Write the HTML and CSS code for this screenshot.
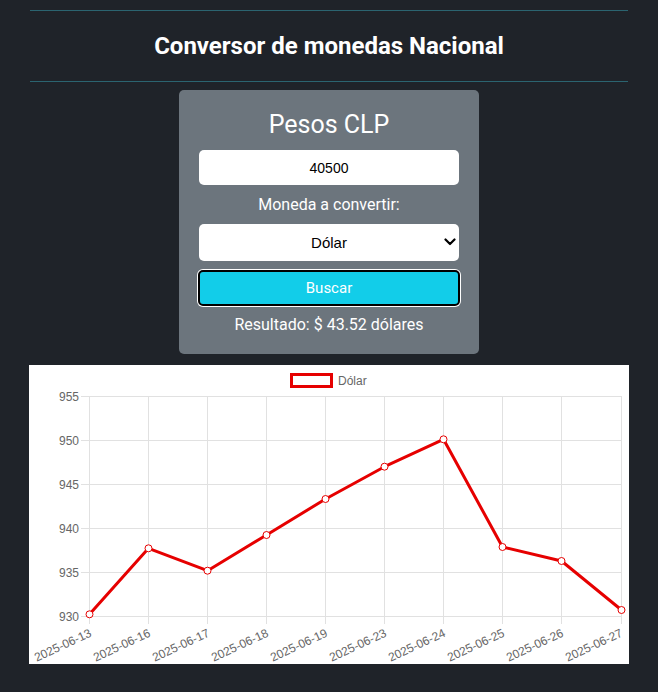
FILE: index.html
```html
<!DOCTYPE html>
<html lang="es">
<head>
<meta charset="utf-8">
<title>Conversor de monedas Nacional</title>
<link rel="stylesheet" href="styles.css">
</head>
<body>
<div class="page">
  <hr class="rule">
  <h1 class="title">Conversor de monedas Nacional</h1>
  <hr class="rule">
  <div class="card">
    <h2 class="card-title">Pesos CLP</h2>
    <input class="field" type="text" value="40500">
    <label class="label">Moneda a convertir:</label>
    <div class="select-wrap">
      <select class="field select">
        <option>Dólar</option>
      </select>
      <svg class="chevron" width="12" height="8" viewBox="0 0 12 8"><path d="M1.5 1.5 L6 6 L10.5 1.5" fill="none" stroke="#000" stroke-width="2.2" stroke-linecap="round" stroke-linejoin="round"/></svg>
    </div>
    <button class="btn">Buscar</button>
    <p class="result">Resultado: $ 43.52 dólares</p>
  </div>
  <div class="chart">
    <svg width="600" height="299" viewBox="0 0 600 299" class="chart-svg">
      <rect x="0" y="0" width="600" height="299" fill="#fff"/>
      <!-- legend -->
      <rect x="262.5" y="9.5" width="40" height="12" fill="#fff" stroke="#e60000" stroke-width="3"/>
      <text x="309" y="19.5" class="lg">Dólar</text>
      <!-- horizontal grid -->
      <g stroke="#e1e1e1" stroke-width="1">
        <line x1="52" y1="31.5" x2="592.5" y2="31.5"/>
        <line x1="52" y1="75.5" x2="592.5" y2="75.5"/>
        <line x1="52" y1="119.5" x2="592.5" y2="119.5"/>
        <line x1="52" y1="163.5" x2="592.5" y2="163.5"/>
        <line x1="52" y1="207.5" x2="592.5" y2="207.5"/>
        <line x1="52" y1="251.5" x2="592.5" y2="251.5"/>
      </g>
      <!-- vertical grid -->
      <g stroke="#e1e1e1" stroke-width="1">
        <line x1="60.5" y1="31" x2="60.5" y2="259"/>
        <line x1="119.5" y1="31" x2="119.5" y2="259"/>
        <line x1="178.5" y1="31" x2="178.5" y2="259"/>
        <line x1="237.5" y1="31" x2="237.5" y2="259"/>
        <line x1="296.5" y1="31" x2="296.5" y2="259"/>
        <line x1="355.5" y1="31" x2="355.5" y2="259"/>
        <line x1="414.5" y1="31" x2="414.5" y2="259"/>
        <line x1="473.5" y1="31" x2="473.5" y2="259"/>
        <line x1="532.5" y1="31" x2="532.5" y2="259"/>
        <line x1="592.5" y1="31" x2="592.5" y2="259"/>
      </g>
      <!-- y labels -->
      <g class="ax" text-anchor="end">
        <text x="50" y="35.5">955</text>
        <text x="50" y="79.5">950</text>
        <text x="50" y="123.5">945</text>
        <text x="50" y="167.5">940</text>
        <text x="50" y="211.5">935</text>
        <text x="50" y="255.5">930</text>
      </g>
      <!-- x labels -->
      <g class="ax" text-anchor="end">
        <text transform="translate(62,268) rotate(-25)" dominant-baseline="middle">2025-06-13</text>
        <text transform="translate(121,268) rotate(-25)" dominant-baseline="middle">2025-06-16</text>
        <text transform="translate(180,268) rotate(-25)" dominant-baseline="middle">2025-06-17</text>
        <text transform="translate(239,268) rotate(-25)" dominant-baseline="middle">2025-06-18</text>
        <text transform="translate(298,268) rotate(-25)" dominant-baseline="middle">2025-06-19</text>
        <text transform="translate(357,268) rotate(-25)" dominant-baseline="middle">2025-06-23</text>
        <text transform="translate(416,268) rotate(-25)" dominant-baseline="middle">2025-06-24</text>
        <text transform="translate(475,268) rotate(-25)" dominant-baseline="middle">2025-06-25</text>
        <text transform="translate(534,268) rotate(-25)" dominant-baseline="middle">2025-06-26</text>
        <text transform="translate(593,268) rotate(-25)" dominant-baseline="middle">2025-06-27</text>
      </g>
      <!-- line -->
      <polyline fill="none" stroke="#e60000" stroke-width="3" stroke-linejoin="round"
        points="60.5,249.3 119.5,183.3 178.5,205.7 237.5,170 296.5,134 355.5,101.7 414.5,74.3 473.5,182 532.5,196 592.5,245"/>
      <g fill="#fff" stroke="#e60000" stroke-width="1">
        <circle cx="60.5" cy="249.3" r="3.5"/>
        <circle cx="119.5" cy="183.3" r="3.5"/>
        <circle cx="178.5" cy="205.7" r="3.5"/>
        <circle cx="237.5" cy="170" r="3.5"/>
        <circle cx="296.5" cy="134" r="3.5"/>
        <circle cx="355.5" cy="101.7" r="3.5"/>
        <circle cx="414.5" cy="74.3" r="3.5"/>
        <circle cx="473.5" cy="182" r="3.5"/>
        <circle cx="532.5" cy="196" r="3.5"/>
        <circle cx="592.5" cy="245" r="3.5"/>
      </g>
    </svg>
  </div>
</div>
</body>
</html>
```

FILE: styles.css
```css
* { box-sizing: border-box; }
html, body {
  margin: 0;
  padding: 0;
  background: #1f2329;
  font-family: Roboto, "Liberation Sans", Arial, sans-serif;
  color: #fff;
}
.page {
  width: 600px;
  margin: 0 auto;
  padding-top: 10px;
  display: flex;
  flex-direction: column;
}
.rule {
  margin: 0 1px;
  border: 0;
  height: 1px;
  background: #2b6470;
}
.title {
  margin: 0;
  height: 70px;
  display: flex;
  align-items: center;
  justify-content: center;
  font-size: 24px;
  font-weight: 700;
  color: #fff;
}
.card {
  width: 300px;
  margin: 8px auto 0;
  background: #6c757d;
  border-radius: 5px;
  padding: 20px 20px 10px;
  display: flex;
  flex-direction: column;
}
.card-title {
  margin: 0 0 10px;
  height: 30px;
  line-height: 30px;
  text-align: center;
  font-size: 25px;
  font-weight: 400;
}
.field {
  width: 260px;
  height: 35px;
  border: 0;
  border-radius: 5px;
  background: #fff;
  color: #000;
  text-align: center;
  font-family: "Liberation Sans", Arial, sans-serif;
  font-size: 14px;
  padding: 0 10px;
}
.label {
  height: 39px;
  line-height: 39px;
  text-align: center;
  font-size: 16px;
}
.select-wrap {
  position: relative;
  width: 260px;
  height: 37px;
}
.select {
  height: 37px;
  -webkit-appearance: none;
  appearance: none;
  text-align-last: center;
  font-size: 15px;
}
.chevron {
  position: absolute;
  right: 3px;
  top: 14px;
}
.btn {
  margin: 9px -1px 0;
  width: 262px;
  height: 36px;
  background: #12cde9;
  border: 2px solid #000;
  border-radius: 5px;
  box-shadow: 0 0 0 1px #fff;
  color: #fff;
  font-family: Roboto, "Liberation Sans", Arial, sans-serif;
  font-size: 15px;
}
.result {
  margin: 0;
  height: 38px;
  line-height: 38px;
  text-align: center;
  font-size: 16px;
}
.chart {
  margin-top: 11px;
  width: 600px;
  height: 299px;
  display: flex;
}
.chart-svg { display: block; }
.ax, .lg {
  font-family: "Liberation Sans", Arial, sans-serif;
  font-size: 12px;
  fill: #666;
}
```
